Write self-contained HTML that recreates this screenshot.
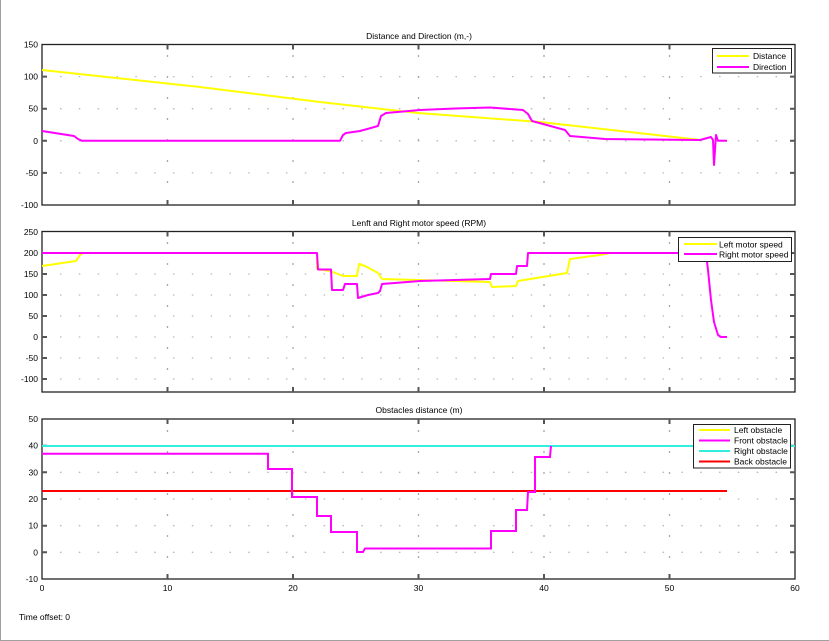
<!DOCTYPE html>
<html><head><meta charset="utf-8"><style>
html,body{margin:0;padding:0;background:#fff;width:829px;height:641px;overflow:hidden}
svg{display:block}
text{font-family:"Liberation Sans",sans-serif;font-size:8.5px;fill:#000}
</style></head><body>
<svg width="829" height="641" viewBox="0 0 829 641">
<rect x="0" y="0" width="829" height="641" fill="#fff"/>
<line x1="0.5" y1="0" x2="0.5" y2="641" stroke="#a0a0a0"/>
<line x1="0" y1="640.5" x2="829" y2="640.5" stroke="#a0a0a0"/>

<g stroke="#b8b8b8" stroke-width="1.3" stroke-dasharray="1.5 17.33" fill="none">
<line x1="60" y1="76.6" x2="795" y2="76.6"/><line x1="60" y1="108.7" x2="795" y2="108.7"/><line x1="60" y1="140.8" x2="795" y2="140.8"/><line x1="60" y1="172.9" x2="795" y2="172.9"/>
<line x1="60" y1="274" x2="795" y2="274"/><line x1="60" y1="295" x2="795" y2="295"/><line x1="60" y1="316" x2="795" y2="316"/><line x1="60" y1="337" x2="795" y2="337"/><line x1="60" y1="358" x2="795" y2="358"/><line x1="60" y1="379" x2="795" y2="379"/>
<line x1="60" y1="445.7" x2="795" y2="445.7"/><line x1="60" y1="472.3" x2="795" y2="472.3"/><line x1="60" y1="499" x2="795" y2="499"/><line x1="60" y1="525.7" x2="795" y2="525.7"/><line x1="60" y1="552.3" x2="795" y2="552.3"/>
</g>
<g stroke="#a8a8a8" stroke-width="1.3" stroke-dasharray="2 19" fill="none">
<line x1="167.5" y1="55" x2="167.5" y2="205"/><line x1="293" y1="55" x2="293" y2="205"/><line x1="418.5" y1="55" x2="418.5" y2="205"/><line x1="544" y1="55" x2="544" y2="205"/><line x1="669.5" y1="55" x2="669.5" y2="205"/>
<line x1="167.5" y1="242" x2="167.5" y2="392"/><line x1="293" y1="242" x2="293" y2="392"/><line x1="418.5" y1="242" x2="418.5" y2="392"/><line x1="544" y1="242" x2="544" y2="392"/><line x1="669.5" y1="242" x2="669.5" y2="392"/>
<line x1="167.5" y1="430" x2="167.5" y2="579"/><line x1="293" y1="430" x2="293" y2="579"/><line x1="418.5" y1="430" x2="418.5" y2="579"/><line x1="544" y1="430" x2="544" y2="579"/><line x1="669.5" y1="430" x2="669.5" y2="579"/>
</g>

<g fill="none" stroke="#222" stroke-width="1.3">
<rect x="42" y="44.5" width="753" height="160.5"/>
<rect x="42" y="231.5" width="753" height="160.5"/>
<rect x="42" y="419" width="753" height="160"/>
</g>
<g stroke="#555" stroke-width="2">
<path d="M167.5 44.5v5M293 44.5v5M418.5 44.5v5M544 44.5v5M669.5 44.5v5M167.5 205v-5M293 205v-5M418.5 205v-5M544 205v-5M669.5 205v-5"/>
<path d="M167.5 231.5v5M293 231.5v5M418.5 231.5v5M544 231.5v5M669.5 231.5v5M167.5 392v-5M293 392v-5M418.5 392v-5M544 392v-5M669.5 392v-5"/>
<path d="M167.5 419v5M293 419v5M418.5 419v5M544 419v5M669.5 419v5M167.5 579v-5M293 579v-5M418.5 579v-5M544 579v-5M669.5 579v-5"/>
<path d="M42 76.6h5M42 108.7h5M42 140.8h5M42 172.9h5M795 76.6h-5M795 108.7h-5M795 140.8h-5M795 172.9h-5"/>
<path d="M42 253h5M42 274h5M42 295h5M42 316h5M42 337h5M42 358h5M42 379h5M795 253h-5M795 274h-5M795 295h-5M795 316h-5M795 337h-5M795 358h-5M795 379h-5"/>
<path d="M42 445.7h5M42 472.3h5M42 499h5M42 525.7h5M42 552.3h5M795 445.7h-5M795 472.3h-5M795 499h-5M795 525.7h-5M795 552.3h-5"/>
</g>

<text x="419" y="39" text-anchor="middle">Distance and Direction (m,-)</text>
<text x="419" y="226" text-anchor="middle">Lenft and Right motor speed (RPM)</text>
<text x="419" y="413" text-anchor="middle">Obstacles distance (m)</text>

<g text-anchor="end">
<text x="38" y="47.5">150</text><text x="38" y="79.6">100</text><text x="38" y="111.7">50</text><text x="38" y="143.8">0</text><text x="38" y="175.9">-50</text><text x="38" y="208">-100</text>
<text x="38" y="235">250</text><text x="38" y="256">200</text><text x="38" y="277">150</text><text x="38" y="298">100</text><text x="38" y="319">50</text><text x="38" y="340">0</text><text x="38" y="361">-50</text><text x="38" y="382">-100</text>
<text x="38" y="422">50</text><text x="38" y="448.7">40</text><text x="38" y="475.3">30</text><text x="38" y="502">20</text><text x="38" y="528.7">10</text><text x="38" y="555.3">0</text><text x="38" y="582">-10</text>
</g>
<g text-anchor="middle">
<text x="42" y="591">0</text><text x="167.5" y="591">10</text><text x="293" y="591">20</text><text x="418.5" y="591">30</text><text x="544" y="591">40</text><text x="669.5" y="591">50</text><text x="795" y="591">60</text>
</g>
<text x="19" y="620">Time offset: 0</text>

<g fill="none" stroke-width="2" stroke-linejoin="round">
<polyline stroke="#ffff00" points="42,70 200,87 320,102 418,113 540,122 701,140"/>
<polyline stroke="#ff00ff" points="42,131 74,136 78,139 82,140.8 340,140.8 343,135 346,133 360,131 378,126 381,116 386,113 420,110 455,108.5 490,107.5 523,110 528,114 532,121 565,130 570,136 605,139 700,140 711,137 713,140 714,165 716,135 718,140.8 727,140.8"/>
</g>

<g fill="none" stroke-width="2" stroke-linejoin="round">
<polyline stroke="#ffff00" points="42,266 76,261 80,255 83,253 317,253 317,269 330,271 343,276 357,276 359,264 365,266 378,273 382,279 490,282 492,287 516,286 518,281 567,273 570,259 600,255 610,253 705,253"/>
<polyline stroke="#ff00ff" points="42,253 317,253 318,269.5 331,269.5 332,290 343,290 345,284 357,284 358,298 368,295 378,293 380,291 382,284 420,281 490,279 491,274 516,274 517,266 527,266 528,253 706,253 708,270 711,300 714,322 718,335 721,337 727,337"/>
</g>

<g fill="none" stroke-width="2">
<line x1="42" y1="446" x2="795" y2="446" stroke="#33eedd"/>
<line x1="42" y1="491" x2="727" y2="491" stroke="#ff0000"/>
<polyline stroke="#ff00ff" points="42,453.7 268,453.7 268,469 292,469 292,497 317,497 317,516 331,516 331,532 357,532 357,552 363,552 365,548.5 491,548.5 491,531 516,531 516,510 527,510 528,492 535,492 535,457 550,457 551,446"/>
</g>

<g>
<rect x="712.5" y="48.5" width="79" height="24.5" fill="#fff" stroke="#222"/>
<line x1="717" y1="56" x2="749" y2="56" stroke="#ffff00" stroke-width="2"/>
<line x1="717" y1="67" x2="749" y2="67" stroke="#ff00ff" stroke-width="2"/>
<text x="753" y="59">Distance</text><text x="753" y="70">Direction</text>

<rect x="678.5" y="237.5" width="113" height="24" fill="#fff" stroke="#222"/>
<line x1="684" y1="244" x2="717" y2="244" stroke="#ffff00" stroke-width="2"/>
<line x1="684" y1="254" x2="717" y2="254" stroke="#ff00ff" stroke-width="2"/>
<text x="719" y="247.5">Left motor speed</text><text x="719" y="257.5">Right motor speed</text>

<rect x="693.5" y="424.5" width="97" height="43.5" fill="#fff" stroke="#222"/>
<line x1="699" y1="430" x2="730" y2="430" stroke="#ffff00" stroke-width="2"/>
<line x1="699" y1="440.5" x2="730" y2="440.5" stroke="#ff00ff" stroke-width="2"/>
<line x1="699" y1="451" x2="730" y2="451" stroke="#33eedd" stroke-width="2"/>
<line x1="699" y1="461.5" x2="730" y2="461.5" stroke="#ff0000" stroke-width="2"/>
<text x="734" y="433">Left obstacle</text><text x="734" y="443.5">Front obstacle</text><text x="734" y="454">Right obstacle</text><text x="734" y="464.5">Back obstacle</text>
</g>
</svg>
</body></html>
